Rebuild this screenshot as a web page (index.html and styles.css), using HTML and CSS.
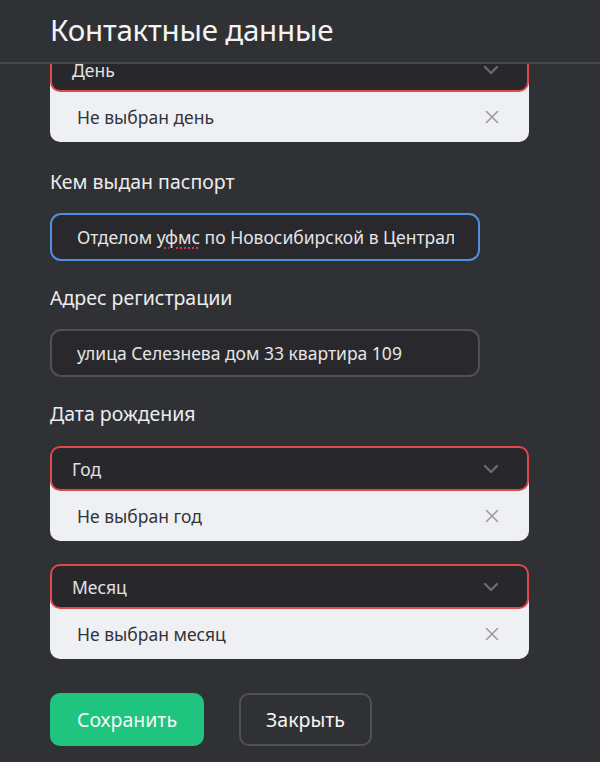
FILE: index.html
```html
<!DOCTYPE html>
<html lang="ru">
<head>
<meta charset="utf-8">
<title>Контактные данные</title>
<link rel="stylesheet" href="styles.css">
</head>
<body>
<header class="topbar">
  <h1 class="title">Контактные данные</h1>
</header>
<main class="form">
  <div class="dropdown">
    <div class="select invalid">
      <span class="select-text">День</span>
      <svg class="chevron" viewBox="0 0 16 10" width="16" height="10"><path d="M2 2 L8 8 L14 2" fill="none" stroke="currentColor" stroke-width="2.4" stroke-linecap="round" stroke-linejoin="round"/></svg>
    </div>
    <div class="list">
      <span class="list-text">Не выбран день</span>
      <svg class="close" viewBox="0 0 14 14" width="14" height="14"><path d="M1.5 1.5 L12.5 12.5 M12.5 1.5 L1.5 12.5" fill="none" stroke="currentColor" stroke-width="1.6" stroke-linecap="round"/></svg>
    </div>
  </div>

  <div class="field first">
    <div class="label">Кем выдан паспорт</div>
    <div class="input focused"><span class="input-text">Отделом <span class="spell">уфмс</span> по Новосибирской в Центральном районе</span></div>
  </div>

  <div class="field">
    <div class="label">Адрес регистрации</div>
    <div class="input"><span class="input-text">улица Селезнева дом 33 квартира 109</span></div>
  </div>

  <div class="field">
    <div class="label label-date">Дата рождения</div>
    <div class="dropdown">
      <div class="select invalid">
        <span class="select-text">Год</span>
        <svg class="chevron" viewBox="0 0 16 10" width="16" height="10"><path d="M2 2 L8 8 L14 2" fill="none" stroke="currentColor" stroke-width="2.4" stroke-linecap="round" stroke-linejoin="round"/></svg>
      </div>
      <div class="list">
        <span class="list-text">Не выбран год</span>
        <svg class="close" viewBox="0 0 14 14" width="14" height="14"><path d="M1.5 1.5 L12.5 12.5 M12.5 1.5 L1.5 12.5" fill="none" stroke="currentColor" stroke-width="1.6" stroke-linecap="round"/></svg>
      </div>
    </div>
    <div class="dropdown second">
      <div class="select invalid">
        <span class="select-text">Месяц</span>
        <svg class="chevron" viewBox="0 0 16 10" width="16" height="10"><path d="M2 2 L8 8 L14 2" fill="none" stroke="currentColor" stroke-width="2.4" stroke-linecap="round" stroke-linejoin="round"/></svg>
      </div>
      <div class="list">
        <span class="list-text">Не выбран месяц</span>
        <svg class="close" viewBox="0 0 14 14" width="14" height="14"><path d="M1.5 1.5 L12.5 12.5 M12.5 1.5 L1.5 12.5" fill="none" stroke="currentColor" stroke-width="1.6" stroke-linecap="round"/></svg>
      </div>
    </div>
  </div>

  <div class="actions">
    <button class="btn btn-save">Сохранить</button>
    <button class="btn btn-close">Закрыть</button>
  </div>
</main>
</body>
</html>
```
FILE: styles.css
```css
* { box-sizing: border-box; }
html, body { margin: 0; padding: 0; }
body {
  background: #303135;
  font-family: "Noto Sans", "Open Sans", sans-serif;
  color: #e6e6e6;
  width: 600px;
  height: 762px;
  overflow: hidden;
}
.topbar {
  position: fixed;
  top: 0; left: 0; right: 0;
  height: 64px;
  background: #303135;
  border-bottom: 2px solid #46474b;
  z-index: 10;
  display: flex;
  align-items: center;
  padding-left: 50px;
  padding-bottom: 4px;
}
.title {
  margin: 0;
  font-size: 29.5px;
  font-weight: 400;
  color: #f4f4f4;
  letter-spacing: -0.2px;
}
.form {
  padding: 47px 0 0 50px;
  display: flex;
  flex-direction: column;
}
.dropdown {
  width: 479px;
  display: flex;
  flex-direction: column;
}
.dropdown.second { margin-top: 23px; }
.select {
  position: relative;
  z-index: 1;
  height: 45px;
  background: #28282c;
  border: 2px solid #e0484b;
  border-radius: 10px;
  display: flex;
  align-items: center;
  justify-content: space-between;
  padding: 0 28px 0 20px;
}
.select-text {
  font-size: 17.5px;
  color: #e2e2e2;
}
.chevron { color: #6a6b70; }
.list {
  margin-top: -10px;
  height: 60px;
  padding: 10px 30px 0 27px;
  background: #eff0f4;
  border-radius: 0 0 10px 10px;
  display: flex;
  align-items: center;
  justify-content: space-between;
}
.list-text {
  font-size: 17.5px;
  color: #333438;
}
.close { color: #9a9b9f; }
.field {
  display: flex;
  flex-direction: column;
  margin-top: 23px;
}
.field.first { margin-top: 26px; }
.label {
  font-size: 19.5px;
  line-height: 28px;
  color: #ececec;
  margin-bottom: 17px;
}
.label-date { margin-bottom: 18px; }
.input {
  width: 430px;
  height: 48px;
  border: 2px solid #505155;
  border-radius: 11px;
  background: #29292d;
  display: flex;
  align-items: center;
  padding: 0 24px 0 25px;
  overflow: hidden;
  white-space: nowrap;
}
.input.focused { border-color: #4f8fdd; }
.input-text {
  font-size: 17.5px;
  color: #e4e4e4;
  overflow: hidden;
}
.spell {
  text-decoration: underline dotted #e0383b;
  text-decoration-thickness: 2px;
  text-underline-offset: 3px;
}
.actions {
  display: flex;
  gap: 35px;
  margin-top: 34px;
}
.btn {
  height: 53px;
  border-radius: 10px;
  font-family: inherit;
  font-size: 19.5px;
  color: #f6f6f6;
  padding: 0;
  cursor: pointer;
}
.btn-save {
  width: 154px;
  background: #1fc47f;
  border: none;
}
.btn-close {
  width: 133px;
  background: transparent;
  border: 2px solid #505155;
}
```
